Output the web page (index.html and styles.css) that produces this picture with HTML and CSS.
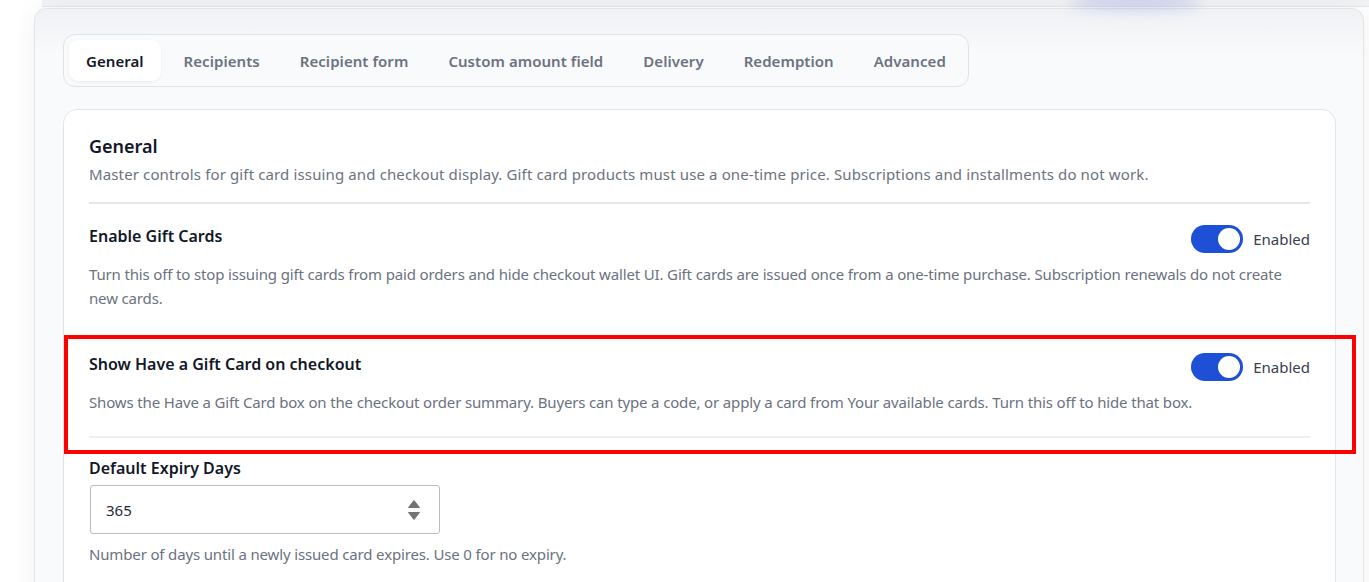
FILE: index.html
```html
<!DOCTYPE html>
<html>
	<head>
		<meta charset="UTF-8">
		<title>Gift card settings</title>
		<link rel="stylesheet" href="styles.css">
	</head>
	<body>
		<div class="topbar"></div>
		<div class="glow"></div>

		<section class="panel">
			<nav class="tabs">
				<span class="tab active">General</span>
				<span class="tab">Recipients</span>
				<span class="tab">Recipient form</span>
				<span class="tab">Custom amount field</span>
				<span class="tab">Delivery</span>
				<span class="tab">Redemption</span>
				<span class="tab">Advanced</span>
			</nav>

			<div class="card">
				<div class="card-head">
					<h2>General</h2>
					<p class="desc">Master controls for gift card issuing and checkout display. Gift card products must use a one-time price. Subscriptions and installments do not work.</p>
				</div>

				<div class="setting">
					<div class="setting-row">
						<h3>Enable Gift Cards</h3>
						<label class="switch-wrap">
							<span class="switch on"><span class="knob"></span></span>
							<span class="switch-label">Enabled</span>
						</label>
					</div>
					<p class="desc">Turn this off to stop issuing gift cards from paid orders and hide checkout wallet UI. Gift cards are issued once from a one-time purchase. Subscription renewals do not create new cards.</p>
				</div>

				<div class="setting divided">
					<div class="setting-row">
						<h3>Show Have a Gift Card on checkout</h3>
						<label class="switch-wrap">
							<span class="switch on"><span class="knob"></span></span>
							<span class="switch-label">Enabled</span>
						</label>
					</div>
					<p class="desc">Shows the Have a Gift Card box on the checkout order summary. Buyers can type a code, or apply a card from Your available cards. Turn this off to hide that box.</p>
				</div>

				<div class="field">
					<h3>Default Expiry Days</h3>
					<div class="number-box">
						<input class="number-input" type="text" value="365">
						<svg class="spin" width="14" height="22" viewBox="0 0 14 22">
							<path d="M7 1.5 L12.5 8.5 H1.5 Z" fill="#737373" stroke="#737373" stroke-width="1" stroke-linejoin="round"/>
							<path d="M7 20.5 L12.5 13.5 H1.5 Z" fill="#737373" stroke="#737373" stroke-width="1" stroke-linejoin="round"/>
						</svg>
					</div>
					<p class="desc">Number of days until a newly issued card expires. Use 0 for no expiry.</p>
				</div>

				<!-- highlight round the checkout option -->
				<div class="mark"></div>
			</div>
		</section>
	</body>
</html>
```

FILE: styles.css
```css
body,
h2,
h3,
p {
	margin: 0;
	padding: 0;
}

body {
	background: #fff;
	font-family: "Noto Sans", "Open Sans", sans-serif;
	color: #111827;
	overflow: hidden;
	position: relative;
}

.topbar {
	height: 6px;
	margin-left: 42px;
	background: #f2f3f5;
	border-bottom: 1px solid #e4e6ea;
}

.glow {
	position: absolute;
	left: 1070px;
	top: -8px;
	width: 130px;
	height: 18px;
	border-radius: 50%;
	background: rgba(110, 130, 220, 0.28);
	filter: blur(7px);
}

.panel {
	margin: 1px 5px 0 34px;
	padding: 25px 27px 40px 28px;
	border: 1px solid #e1e4e9;
	border-radius: 12px;
	background: linear-gradient(#eff1f4, #f8fafc 45px);
	box-shadow: 0 0 26px rgba(15, 23, 42, 0.06);
}

/* tab strip */
.tabs {
	display: inline-flex;
	gap: 6px;
	padding: 5px;
	border: 1px solid #dfe3e8;
	border-radius: 12px;
	background: #f8fafc;
}

.tab {
	height: 41px;
	padding: 0 17px;
	display: flex;
	align-items: center;
	border-radius: 9px;
	font-size: 15px;
	font-weight: 600;
	color: #6b7280;
	letter-spacing: 0.05px;
}

.tab.active {
	background: #fff;
	color: #111827;
	box-shadow: 0 1px 3px rgba(15, 23, 42, 0.06);
}

/* settings card */
.card {
	position: relative;
	margin-top: 22px;
	padding: 0 25px 40px 25px;
	background: #fff;
	border: 1px solid #e2e6ea;
	border-radius: 14px;
}

.card-head {
	padding: 24px 0 16px;
	border-bottom: 2px solid #e5e7eb;
}

h2 {
	font-size: 18px;
	line-height: 24px;
	font-weight: 600;
}

h3 {
	font-size: 16px;
	line-height: 24px;
	font-weight: 600;
}

.card-head h2 {
	margin-bottom: 4px;
}

.desc {
	font-size: 15px;
	line-height: 24px;
	color: #6b7280;
	letter-spacing: -0.15px;
}

.card-head .desc {
	letter-spacing: 0.13px;
}

.setting {
	padding: 20px 0 20px;
}

.setting.divided {
	padding-top: 22px;
	padding-bottom: 22px;
	border-bottom: 2px solid #eeeff1;
}

.setting-row {
	display: flex;
	justify-content: space-between;
	align-items: flex-start;
	height: 29px;
	margin-bottom: 9px;
}

.switch-wrap {
	display: flex;
	align-items: center;
	margin-top: 1px;
}

.switch {
	width: 52px;
	height: 28px;
	border-radius: 14px;
	background: #cbd5e1;
	display: flex;
	align-items: center;
	padding: 0 3px;
	box-sizing: border-box;
}

.switch.on {
	background: #1d4fd7;
	justify-content: flex-end;
}

.knob {
	width: 22px;
	height: 22px;
	border-radius: 50%;
	background: #fff;
}

.switch-label {
	margin-left: 10px;
	font-size: 15px;
	color: #374151;
}

.field {
	padding-top: 18px;
}

.number-box {
	width: 350px;
	height: 49px;
	margin: 5px 0 8px 1px;
	box-sizing: border-box;
	border: 1px solid #b9bcc1;
	border-radius: 3px;
	display: flex;
	align-items: center;
	padding: 0 18px 0 15px;
}

.number-input {
	flex: 1;
	border: 0;
	outline: 0;
	padding: 0;
	font-family: inherit;
	font-size: 15px;
	color: #1f2937;
	background: transparent;
}

.mark {
	position: absolute;
	left: 0;
	top: 225px;
	width: 1292px;
	height: 119px;
	box-sizing: border-box;
	border: 4px solid #ff0000;
	pointer-events: none;
}
```
